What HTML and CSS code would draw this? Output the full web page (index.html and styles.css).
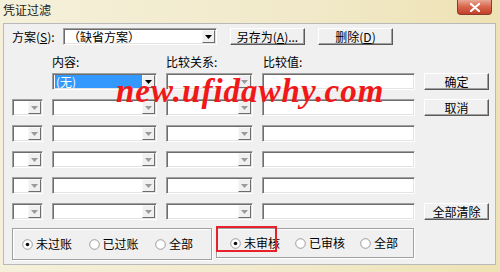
FILE: index.html
```html
<!DOCTYPE html>
<html>
<head>
<meta charset="utf-8">
<link rel="stylesheet" href="styles.css">
</head>
<body>
<div class="window">
  <div class="titlebar">
    <span class="title">凭证过滤</span>
    <span class="close"><svg width="12" height="9" viewBox="0 0 12 9"><path d="M2 1 L10 8 M10 1 L2 8" stroke="#fff" stroke-width="2.2" stroke-linecap="round"/></svg></span>
  </div>
  <div class="panel">
    <div class="scheme">
      <span class="scheme-label">方案(<u>S</u>):</span>
      <div class="field combo scheme-combo"><span class="ctext">（缺省方案）</span><span class="arrow dark"><svg width="7" height="4" viewBox="0 0 7 4"><path d="M0 0 H7 L3.5 4Z"/></svg></span></div>
      <button class="btn scheme-btn">另存为(<u>A</u>)...</button>
      <button class="btn scheme-btn">删除(<u>D</u>)</button>
    </div>
    <div class="labels">
      <span></span><span>内容:</span><span>比较关系:</span><span>比较值:</span><span></span>
    </div>
    <div class="grid">
      <span></span>
      <div class="field combo"><span class="ctext"><span class="sel">(无)</span></span><span class="arrow dark"><svg width="7" height="4" viewBox="0 0 7 4"><path d="M0 0 H7 L3.5 4Z"/></svg></span></div>
      <div class="field combo"><span class="ctext"></span><span class="arrow"><svg width="7" height="4" viewBox="0 0 7 4"><path d="M0 0 H7 L3.5 4Z"/></svg></span></div>
      <div class="field"></div>
      <button class="btn">确定</button>

      <div class="field combo"><span class="ctext"></span><span class="arrow"><svg width="7" height="4" viewBox="0 0 7 4"><path d="M0 0 H7 L3.5 4Z"/></svg></span></div>
      <div class="field combo"><span class="ctext"></span><span class="arrow"><svg width="7" height="4" viewBox="0 0 7 4"><path d="M0 0 H7 L3.5 4Z"/></svg></span></div>
      <div class="field combo"><span class="ctext"></span><span class="arrow"><svg width="7" height="4" viewBox="0 0 7 4"><path d="M0 0 H7 L3.5 4Z"/></svg></span></div>
      <div class="field"></div>
      <button class="btn">取消</button>

      <div class="field combo"><span class="ctext"></span><span class="arrow"><svg width="7" height="4" viewBox="0 0 7 4"><path d="M0 0 H7 L3.5 4Z"/></svg></span></div>
      <div class="field combo"><span class="ctext"></span><span class="arrow"><svg width="7" height="4" viewBox="0 0 7 4"><path d="M0 0 H7 L3.5 4Z"/></svg></span></div>
      <div class="field combo"><span class="ctext"></span><span class="arrow"><svg width="7" height="4" viewBox="0 0 7 4"><path d="M0 0 H7 L3.5 4Z"/></svg></span></div>
      <div class="field"></div>
      <span></span>

      <div class="field combo"><span class="ctext"></span><span class="arrow"><svg width="7" height="4" viewBox="0 0 7 4"><path d="M0 0 H7 L3.5 4Z"/></svg></span></div>
      <div class="field combo"><span class="ctext"></span><span class="arrow"><svg width="7" height="4" viewBox="0 0 7 4"><path d="M0 0 H7 L3.5 4Z"/></svg></span></div>
      <div class="field combo"><span class="ctext"></span><span class="arrow"><svg width="7" height="4" viewBox="0 0 7 4"><path d="M0 0 H7 L3.5 4Z"/></svg></span></div>
      <div class="field"></div>
      <span></span>

      <div class="field combo"><span class="ctext"></span><span class="arrow"><svg width="7" height="4" viewBox="0 0 7 4"><path d="M0 0 H7 L3.5 4Z"/></svg></span></div>
      <div class="field combo"><span class="ctext"></span><span class="arrow"><svg width="7" height="4" viewBox="0 0 7 4"><path d="M0 0 H7 L3.5 4Z"/></svg></span></div>
      <div class="field combo"><span class="ctext"></span><span class="arrow"><svg width="7" height="4" viewBox="0 0 7 4"><path d="M0 0 H7 L3.5 4Z"/></svg></span></div>
      <div class="field"></div>
      <span></span>

      <div class="field combo"><span class="ctext"></span><span class="arrow"><svg width="7" height="4" viewBox="0 0 7 4"><path d="M0 0 H7 L3.5 4Z"/></svg></span></div>
      <div class="field combo"><span class="ctext"></span><span class="arrow"><svg width="7" height="4" viewBox="0 0 7 4"><path d="M0 0 H7 L3.5 4Z"/></svg></span></div>
      <div class="field combo"><span class="ctext"></span><span class="arrow"><svg width="7" height="4" viewBox="0 0 7 4"><path d="M0 0 H7 L3.5 4Z"/></svg></span></div>
      <div class="field"></div>
      <button class="btn">全部清除</button>
    </div>
    <div class="groups">
      <div class="group g1">
        <span class="radio-item"><svg class="radio" width="11" height="11" viewBox="0 0 11 11"><circle cx="5.5" cy="5.5" r="4.8" fill="#fff" stroke="#9a9a9a"/><circle cx="5.5" cy="5.5" r="1.8" fill="#111"/></svg>未过账</span>
        <span class="radio-item"><svg class="radio" width="11" height="11" viewBox="0 0 11 11"><circle cx="5.5" cy="5.5" r="4.8" fill="#fff" stroke="#9a9a9a"/></svg>已过账</span>
        <span class="radio-item"><svg class="radio" width="11" height="11" viewBox="0 0 11 11"><circle cx="5.5" cy="5.5" r="4.8" fill="#fff" stroke="#9a9a9a"/></svg>全部</span>
      </div>
      <div class="group g2">
        <span class="radio-item"><svg class="radio" width="11" height="11" viewBox="0 0 11 11"><circle cx="5.5" cy="5.5" r="4.8" fill="#fff" stroke="#9a9a9a"/><circle cx="5.5" cy="5.5" r="1.8" fill="#111"/></svg>未审核</span>
        <span class="radio-item"><svg class="radio" width="11" height="11" viewBox="0 0 11 11"><circle cx="5.5" cy="5.5" r="4.8" fill="#fff" stroke="#9a9a9a"/></svg>已审核</span>
        <span class="radio-item"><svg class="radio" width="11" height="11" viewBox="0 0 11 11"><circle cx="5.5" cy="5.5" r="4.8" fill="#fff" stroke="#9a9a9a"/></svg>全部</span>
        <span class="highlight"></span>
      </div>
    </div>
  </div>
  <div class="watermark">new.ufidawhy.com</div>
</div>
</body>
</html>
```

FILE: styles.css
```css
* { box-sizing: border-box; }
body {
  margin: 0;
  font-family: "Noto Sans CJK SC", "Liberation Sans", sans-serif;
  font-size: 12px;
  color: #000;
}
.window {
  position: relative;
  width: 500px;
  height: 272px;
  background: linear-gradient(90deg, #f5f0da 0%, #f1e9c9 60%, #eee2b4 100%);
  overflow: hidden;
}
.titlebar {
  height: 23px;
  display: flex;
  align-items: flex-start;
}
.title {
  margin-top: 3px;
  margin-left: 3px;
  font-size: 12px;
  line-height: 14px;
  color: #1a1a1a;
}
.close {
  margin-left: auto;
  margin-right: 8px;
  width: 35px;
  height: 15px;
  border: 1px solid #8c3a2a;
  border-top: none;
  border-radius: 0 0 4px 4px;
  background: linear-gradient(#e9a896 0%, #d9694f 45%, #c2402a 100%);
  display: flex;
  align-items: center;
  justify-content: center;
}
.panel {
  margin: 0 4px 0 3px;
  height: 242px;
  background: #f0f0f0;
  border: 1px solid #b9b9b9;
  padding: 4px 0 0 8px;
}
.scheme {
  display: flex;
  align-items: center;
  height: 17px;
}
.scheme-label {
  width: 51px;
  line-height: 14px;
}
.scheme-combo {
  width: 154px;
  height: 17px;
  margin-right: 13px;
}
.scheme-btn {
  width: 75px;
  height: 17px;
  margin-right: 13px;
}
.labels {
  margin-top: 10px;
  height: 16px;
  display: grid;
  grid-template-columns: 31px 105px 87px 153px 65px;
  column-gap: 9px;
  line-height: 14px;
}
.labels span:nth-child(4) { padding-left: 1px; }
.grid {
  margin-top: 2px;
  display: grid;
  grid-template-columns: 31px 105px 87px 153px 65px;
  grid-auto-rows: 17px;
  column-gap: 9px;
  row-gap: 9px;
}
.field {
  background: #fff;
  border: 1px solid;
  border-color: #a0a0a0 #ffffff #ffffff #a0a0a0;
  box-shadow: inset 1px 1px 0 #6d6d6d, inset -1px -1px 0 #e3e3e3;
  height: 17px;
}
.combo {
  display: flex;
  align-items: stretch;
  padding: 1px;
}
.ctext {
  flex: 1;
  min-width: 0;
  display: flex;
  align-items: center;
  padding-left: 1px;
  line-height: 14px;
  white-space: nowrap;
}
.scheme-combo .ctext { padding-left: 3px; }
.sel {
  display: flex;
  align-items: center;
  width: 87px;
  height: 13px;
  background: #3399ff;
  color: #fff;
  line-height: 14px;
  padding-left: 1px;
}
.arrow {
  flex: none;
  width: 13px;
  background: #f0f0f0;
  border: 1px solid;
  border-color: #f8f8f8 #6d6d6d #6d6d6d #f8f8f8;
  display: flex;
  align-items: center;
  justify-content: center;
}
.arrow svg { fill: #9a9a9a; }
.arrow.dark svg { fill: #000; }
.btn {
  font-family: inherit;
  font-size: 12px;
  color: #000;
  padding: 0;
  height: 17px;
  background: #f0f0f0;
  border: 1px solid;
  border-color: #ffffff #5a5a5a #5a5a5a #ffffff;
  box-shadow: inset -1px -1px 0 #a0a0a0;
  line-height: 14px;
}
.groups {
  margin-top: 8px;
  display: flex;
  gap: 4px;
}
.group {
  position: relative;
  height: 32px;
  border: 1px solid #a0a0a0;
  box-shadow: inset 1px 1px 0 #fff, 1px 1px 0 #fff;
  display: flex;
  align-items: center;
}
.g1 { width: 200px; padding-left: 9px; }
.g1 .radio-item { width: 66.5px; }
.g2 { width: 198px; height: 30px; padding-left: 13px; }
.g2 .radio-item { width: 65px; }
.radio-item {
  flex: none;
  display: flex;
  align-items: center;
  line-height: 14px;
}
.radio { margin-right: 3px; flex: none; }
.highlight {
  position: absolute;
  left: -1px;
  top: -3px;
  width: 61px;
  height: 26px;
  border: 2px solid #e8202a;
}
.watermark {
  position: absolute;
  left: 116px;
  top: 71px;
  font-family: "Liberation Serif", serif;
  font-style: italic;
  font-weight: bold;
  font-size: 33px;
  letter-spacing: 1px;
  color: #f01818;
  line-height: 40px;
  white-space: nowrap;
}
```
